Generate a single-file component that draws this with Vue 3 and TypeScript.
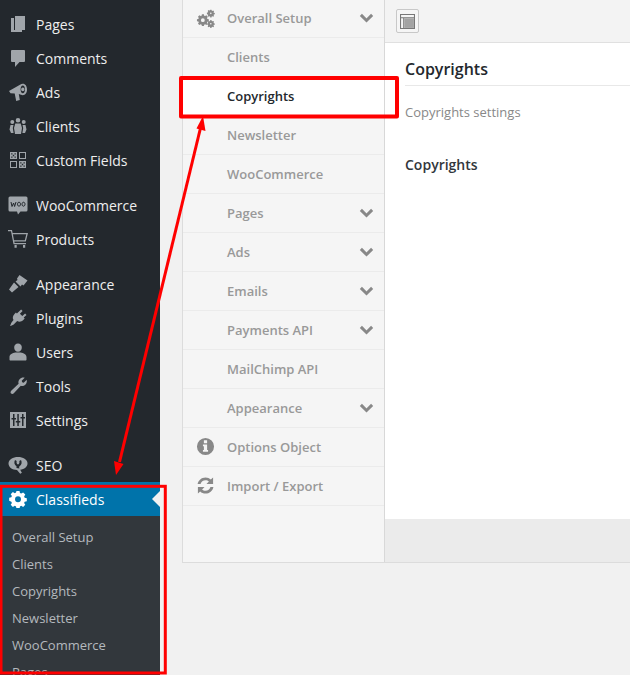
<script setup lang="ts">
type MenuItem = { label: string; icon: string; gapAfter?: boolean }
type NavItem = { label: string; icon?: string; arrow?: boolean; active?: boolean }

const menu: MenuItem[] = [
  { label: 'Pages', icon: 'pages' },
  { label: 'Comments', icon: 'comments' },
  { label: 'Ads', icon: 'ads' },
  { label: 'Clients', icon: 'clients' },
  { label: 'Custom Fields', icon: 'fields', gapAfter: true },
  { label: 'WooCommerce', icon: 'woo' },
  { label: 'Products', icon: 'products', gapAfter: true },
  { label: 'Appearance', icon: 'appearance' },
  { label: 'Plugins', icon: 'plugins' },
  { label: 'Users', icon: 'users' },
  { label: 'Tools', icon: 'tools' },
  { label: 'Settings', icon: 'settings', gapAfter: true },
  { label: 'SEO', icon: 'seo' },
]

const subMenu = ['Overall Setup', 'Clients', 'Copyrights', 'Newsletter', 'WooCommerce', 'Pages']

const nav: NavItem[] = [
  { label: 'Overall Setup', icon: 'cogs', arrow: true },
  { label: 'Clients' },
  { label: 'Copyrights', active: true },
  { label: 'Newsletter' },
  { label: 'WooCommerce' },
  { label: 'Pages', arrow: true },
  { label: 'Ads', arrow: true },
  { label: 'Emails', arrow: true },
  { label: 'Payments API', arrow: true },
  { label: 'MailChimp API' },
  { label: 'Appearance', arrow: true },
  { label: 'Options Object', icon: 'info' },
  { label: 'Import / Export', icon: 'refresh' },
]
</script>

<template>
  <div class="page">
    <aside class="sidebar">
      <ul class="menu">
        <li v-for="item in menu" :key="item.label" class="menu-item" :class="{ gap: item.gapAfter }">
          <svg class="menu-icon" viewBox="0 0 20 20">
            <path v-if="item.icon === 'pages'" d="M7 2h10v14H7zM3 4h3v12h8v2H3z" />
            <path v-else-if="item.icon === 'comments'" d="M4 2h12a1 1 0 0 1 1 1v10a1 1 0 0 1-1 1h-4.500l-4.500 5v-5H4a1 1 0 0 1-1-1V3a1 1 0 0 1 1-1z" />
            <path v-else-if="item.icon === 'ads'" fill-rule="evenodd" d="M1 9l11-6.300c1-.6 1.800-.9 2.800-.9 2.500 0 4.200 2.400 4.200 5.700s-1.700 5.700-4.200 5.700c-.6 0-1.200-.1-1.800-.4l-2.200-.7 1 5.900-3.600 1-1.500-7.400-4.200-.3zM14.800 3.500c-1.200 0-2.200 1.700-2.200 3.900s1 3.900 2.200 3.900 2.200-1.700 2.200-3.900-1-3.900-2.200-3.900zm0 2.100a1.700 1.800 0 1 1 0 3.600 1.700 1.800 0 0 1 0-3.600z" />
            <path v-else-if="item.icon === 'clients'" d="M10 2a2.300 2.300 0 1 1 0 4.600A2.300 2.300 0 0 1 10 2zM4.300 4a2 2 0 1 1 0 4 2 2 0 0 1 0-4zm11.400 0a2 2 0 1 1 0 4 2 2 0 0 1 0-4zM7.300 7.500h5.400L14 12l-1 6H7l-1-6zM2.500 9h3L4.800 12l.8 5H3l-1.500-3.500zm12 0h3l1 4.500L17 17h-2.600l.8-5z" />
            <path v-else-if="item.icon === 'fields'" fill-rule="evenodd" d="M2 2h7v7H2zm1.200 1.200v1.300h1.300V3.200zm3.300 0v1.300h1.300V3.200zM4.800 4.800v1.400h1.400V4.800zM3.200 6.500v1.300h1.300V6.500zm3.300 0v1.300h1.300V6.500zM11 2h7v7h-7zm1 1v5h5V3zM2 11h7v7H2zm1 1v5h5v-5zm8-1h7v7h-7zm1.200 1.200v1.300h1.300v-1.300zm3.300 0v1.300h1.300v-1.300zm-1.700 1.600v1.400h1.400v-1.400zm-1.600 1.700v1.300h1.300v-1.300zm3.300 0v1.300h1.300v-1.300z" />
            <g v-else-if="item.icon === 'woo'">
              <path d="M2 1.500h16a1.500 1.500 0 0 1 1.500 1.500v12a1.500 1.500 0 0 1-1.500 1.500h-5.500L10 19.500l-1-3H2A1.500 1.500 0 0 1 .5 15V3A1.500 1.500 0 0 1 2 1.500z" />
              <path class="woo-mark" d="M3 7l1 4.500L5.600 8l1 3.500L8 7M11 7.200a1.500 2 0 1 0 .01 0M15.500 7.200a1.500 2 0 1 0 .01 0" />
            </g>
            <path v-else-if="item.icon === 'products'" d="M0 1h4l.6 3H20l-2.200 8.500H6.300l.3 1.500H18v1.300H5.500L3 2.300H0zm4.900 4.300 1.100 5.900h10.800l1.500-5.900zM6.500 16h2.200v2.800H6.500zm8.500 0h2.200v2.800H15z" />
            <path v-else-if="item.icon === 'appearance'" d="M11.500 1l8 5.500-4 5-1.500-1-1.500 2-5-5 2-1.500-.5-1.500zM6 8.500l4.500 4.500-6.500 5.500-3-3z" />
            <path v-else-if="item.icon === 'plugins'" d="M13.100 1.500l1.500 1.400-2.700 2.800 2.400 2.400 2.800-2.700 1.400 1.500-2.800 2.700 1 1-1.400 1.400c-1.800 1.800-4.200 2.200-6.100 1l-3.500 3.500c-.8.800-3.500 1.500-3.500 1.500S2.900 15 3.700 14.200l1.800-2.200C4.300 10 4.700 7.700 6.500 5.900l1.400-1.400 1 1z" />
            <path v-else-if="item.icon === 'users'" d="M10 1.500a3.800 3.800 0 0 1 3.800 4.200c0 2-1.500 4-3.800 4S6.200 7.700 6.200 5.700A3.800 3.800 0 0 1 10 1.500zm-2.600 9h5.200c3 .4 5.900 1.800 5.900 4.500v2.500c0 .6-.4 1-1 1H2.500c-.6 0-1-.4-1-1V15c0-2.700 2.900-4.100 5.900-4.500z" />
            <path v-else-if="item.icon === 'tools'" d="M16.700 1.800l-3 3 .5 1.500 1.500.5 3-3c.4 2-.1 3.700-1.400 5-1.200 1.200-2.900 1.500-4.500 1L5.800 17.300c-.7.700-1.900.9-2.700.2-.8-.8-.7-2 .1-2.800l7.400-6.900c-.5-1.600-.2-3.400 1-4.600 1.300-1.300 3.100-1.900 5.100-1.400z" />
            <path v-else-if="item.icon === 'settings'" fill-rule="evenodd" d="M2 2h16v16H2zm3 2v4H3.500v1.500H5V16h1.500V9.500H8V8H6.500V4zm4.300 0v7H7.800v1.500h1.500V16h1.500v-3.500h1.500V11h-1.500V4zM14 4v3h-1.500v1.500H14V16h1.500V8.500H17V7h-1.500V4z" />
            <path v-else-if="item.icon === 'seo'" fill-rule="evenodd" d="M10 2c5 0 9.500 2.600 9.500 6.500 0 3.300-3.200 5.700-7.300 6.300l1.700 2.900-1.700 1-3.200-3.700C4.400 15 .5 12.200.5 8.500.5 4.600 5 2 10 2zM7 5C5.800 7 6.300 10 8.500 11.200V13l3 .5c-.4-.7-.5-1.700 0-2.300 2.200-1.200 2.700-4.200 1.500-6.200l-1.700 1c.4 1.300.2 2.900-1.300 3.500-1.500-.6-1.700-2.200-1.300-3.500z" />
          </svg>
          <span>{{ item.label }}</span>
        </li>
      </ul>

      <div class="current">
        <svg class="current-icon" viewBox="0 0 20 20">
          <path fill-rule="evenodd" d="M8.300 1h3.400l.5 2.400 1.400.6 2.100-1.300 2.400 2.400-1.300 2.100.6 1.400 2.400.5v3.400l-2.400.5-.6 1.400 1.300 2.100-2.400 2.400-2.100-1.300-1.400.6-.5 2.400H8.300l-.5-2.400-1.400-.6-2.100 1.300-2.400-2.400 1.300-2.100-.6-1.400L.2 12V8.600l2.400-.5.6-1.400-1.300-2.100 2.400-2.400 2.100 1.300 1.400-.6zM10 7a3.300 3.300 0 1 0 0 6.600A3.300 3.300 0 0 0 10 7z" />
        </svg>
        <span>Classifieds</span>
        <i class="current-notch" />
      </div>
      <ul class="submenu">
        <li v-for="label in subMenu" :key="label">{{ label }}</li>
      </ul>
    </aside>

    <main class="main">
      <section class="panel">
        <nav class="nav">
          <div v-for="item in nav" :key="item.label" class="nav-item" :class="{ active: item.active }">
            <svg v-if="item.icon" class="nav-icon" viewBox="0 0 20 20">
              <path v-if="item.icon === 'cogs'" fill-rule="evenodd" d="M6.200 5.500h2.100l.3 1.500 1 .4 1.300-.8 1.500 1.500-.8 1.300.4 1 1.500.3v2.100l-1.500.3-.4 1 .8 1.300-1.500 1.500-1.300-.8-1 .4-.3 1.500H6.200l-.3-1.500-1-.4-1.300.8-1.500-1.500.8-1.300-.4-1-1.500-.3v-2.100l1.500-.3.4-1-.8-1.300 1.500-1.500 1.300.8 1-.4zM7.200 9.800a2 2 0 1 0 0 4 2 2 0 0 0 0-4zM15 .7h1.300l.2 1 .7.3.9-.5.9.9-.5.9.3.7 1 .2v1.300l-1 .2-.3.7.5.9-.9.900-.9-.5-.7.3-.2 1H15l-.2-1-.7-.3-.9.5-.9-.9.5-.9-.3-.7-1-.2V3.800l1-.2.3-.7-.5-.9.9-.9.9.5.7-.3zm.6 3a.8.800 0 1 0 0 1.700.8.800 0 0 0 0-1.700zM15 11.700h1.300l.2 1 .7.3.9-.5.9.9-.5.9.3.7 1 .2v1.300l-1 .2-.3.7.5.9-.9.900-.9-.5-.7.3-.2 1H15l-.2-1-.7-.3-.9.5-.9-.9.5-.9-.3-.7-1-.2v-1.300l1-.2.3-.7-.5-.9.9-.9.9.5.7-.3zm.6 3a.8.800 0 1 0 0 1.700.8.800 0 0 0 0-1.700z" />
              <path v-else-if="item.icon === 'info'" fill-rule="evenodd" d="M10 1a9 9 0 1 1 0 18 9 9 0 0 1 0-18zM8.300 3.500v3h3.400v-3zM7.300 8v1.800h1v4H7.300v1.800h5.400v-1.800h-1V8z" />
              <path v-else-if="item.icon === 'refresh'" d="M10 1.500c2.200 0 4.100.9 5.600 2.300L18 1.500v7h-7l2.600-2.600C12.700 5 11.400 4.500 10 4.500c-2.500 0-4.600 1.700-5.200 4H1.700C2.400 4.500 5.800 1.500 10 1.500zM2 11.500h7l-2.600 2.600c.9.900 2.200 1.400 3.600 1.400 2.500 0 4.600-1.700 5.200-4h3.100c-.7 4-4.100 7-8.300 7-2.200 0-4.100-.9-5.600-2.300L2 18.500z" />
            </svg>
            <span class="nav-label">{{ item.label }}</span>
            <svg v-if="item.arrow" class="nav-arrow" viewBox="0 0 12 8">
              <path d="M1.500 1.500 6 6l4.500-4.500" />
            </svg>
          </div>
        </nav>

        <div class="content">
          <header class="toolbar">
            <button class="layout-btn" type="button" aria-label="Layout">
              <svg viewBox="0 0 14 14">
                <path fill-rule="evenodd" d="M0 0h14v14H0zm1 1v2h12V1zm0 3v9h2V4zm3 0v9h9V4z" fill="#777" />
                <path d="M4 4h9v9H4z" fill="#a3a3a3" />
              </svg>
            </button>
          </header>
          <div class="body">
            <h2 class="title">Copyrights</h2>
            <p class="desc">Copyrights settings</p>
            <h3 class="subtitle">Copyrights</h3>
          </div>
          <footer class="footer" />
        </div>
      </section>
    </main>

    <svg class="marks" viewBox="0 0 630 675">
      <rect class="thick" x="181" y="78" width="216" height="38.500" />
      <rect x="1" y="486.300" width="164.300" height="186.700" />
      <line x1="200.500" y1="128" x2="119.500" y2="462" />
      <polygon points="203,116 205.500,131 196.500,128.500" />
      <polygon points="116,475 114,461 123.500,464" />
    </svg>
  </div>
</template>

<style scoped>
.page {
  position: relative;
  display: flex;
  width: 630px;
  height: 675px;
  overflow: hidden;
  background: #f1f1f1;
  font-family: "Open Sans", sans-serif;
}

.sidebar {
  flex: none;
  width: 160px;
  padding-top: 7px;
  background: #23282d;
}
.menu, .submenu { margin: 0; padding: 0; list-style: none; }
.menu-item {
  display: flex;
  align-items: center;
  height: 34px;
  padding-left: 8px;
  color: #eee;
  font-size: 14px;
}
.menu-item.gap { margin-bottom: 11px; }
.menu-icon {
  flex: none;
  width: 20px;
  height: 20px;
  margin-right: 8px;
  fill: #a0a5aa;
}
.woo-mark { fill: none; stroke: #23282d; stroke-width: 1; }

.current {
  position: relative;
  display: flex;
  align-items: center;
  height: 34px;
  padding-left: 9px;
  background: #0073aa;
  color: #fff;
  font-size: 14px;
}
.current-icon {
  flex: none;
  width: 18px;
  height: 18px;
  margin-right: 9px;
  fill: #fff;
}
.current-notch {
  position: absolute;
  right: 0;
  top: 9px;
  border: 8px solid transparent;
  border-left-width: 0;
  border-right-color: #f1f1f1;
}
.submenu {
  padding-top: 8px;
  height: 200px;
  background: #32373c;
}
.submenu li {
  height: 27px;
  padding-left: 12px;
  color: #b4b9be;
  font-size: 13px;
  line-height: 27px;
}

.main { flex: 1; min-width: 0; padding-left: 22px; }
.panel {
  display: flex;
  width: 471px;
  height: 562px;
  border-bottom: 1px solid #dcdcdc;
  border-left: 1px solid #dcdcdc;
  background: #f5f5f5;
}
.nav {
  flex: none;
  width: 201px;
  border-right: 1px solid #d8d8d8;
}
.nav-item {
  display: flex;
  align-items: center;
  height: 39px;
  padding: 0 10px 0 44px;
  position: relative;
  border-bottom: 1px solid #ebebeb;
  color: #999;
  font-size: 13px;
  font-weight: 600;
  box-sizing: border-box;
}
.nav-item:first-child { height: 38px; padding-bottom: 2px; }
.nav-item.active { background: #fff; color: #23282d; }
.nav-icon {
  position: absolute;
  left: 13px;
  top: 50%;
  width: 19px;
  height: 19px;
  margin-top: -10px;
  fill: #888;
}
.nav-label { flex: 1; }
.nav-arrow {
  flex: none;
  width: 15px;
  height: 10px;
  fill: none;
  stroke: #888;
  stroke-width: 2.400;
}

.content { flex: 1; display: flex; flex-direction: column; min-width: 0; }
.toolbar {
  flex: none;
  height: 43px;
  padding: 9px 0 0 11px;
  box-sizing: border-box;
  border-bottom: 1px solid #e0e0e0;
  background: #f3f3f3;
}
.layout-btn {
  display: flex;
  align-items: center;
  justify-content: center;
  width: 23px;
  height: 24px;
  padding: 0;
  border: 1px solid #c8c8c8;
  border-radius: 2px;
  background: #f5f5f5;
}
.layout-btn svg { width: 15px; height: 15px; }
.body {
  flex: 1;
  padding: 0 0 0 20px;
  background: #fff;
}
.title {
  margin: 0;
  height: 42px;
  border-bottom: 1px solid #e8e8e8;
  color: #23282d;
  font-size: 16px;
  font-weight: 600;
  line-height: 52px;
}
.desc {
  margin: 16px 0 0;
  color: #888;
  font-size: 13px;
  line-height: 20px;
}
.subtitle {
  margin: 33px 0 0;
  color: #32373c;
  font-size: 14px;
  font-weight: 600;
  line-height: 20px;
}
.footer { flex: none; height: 43px; background: #ebebeb; }

.marks {
  position: absolute;
  inset: 0;
  width: 630px;
  height: 675px;
  pointer-events: none;
}
.marks rect { fill: none; stroke: #f00; stroke-width: 3; }
.marks rect.thick { stroke-width: 4; stroke-linejoin: round; }
.marks line { stroke: #f00; stroke-width: 3; }
.marks polygon { fill: #f00; }
</style>
